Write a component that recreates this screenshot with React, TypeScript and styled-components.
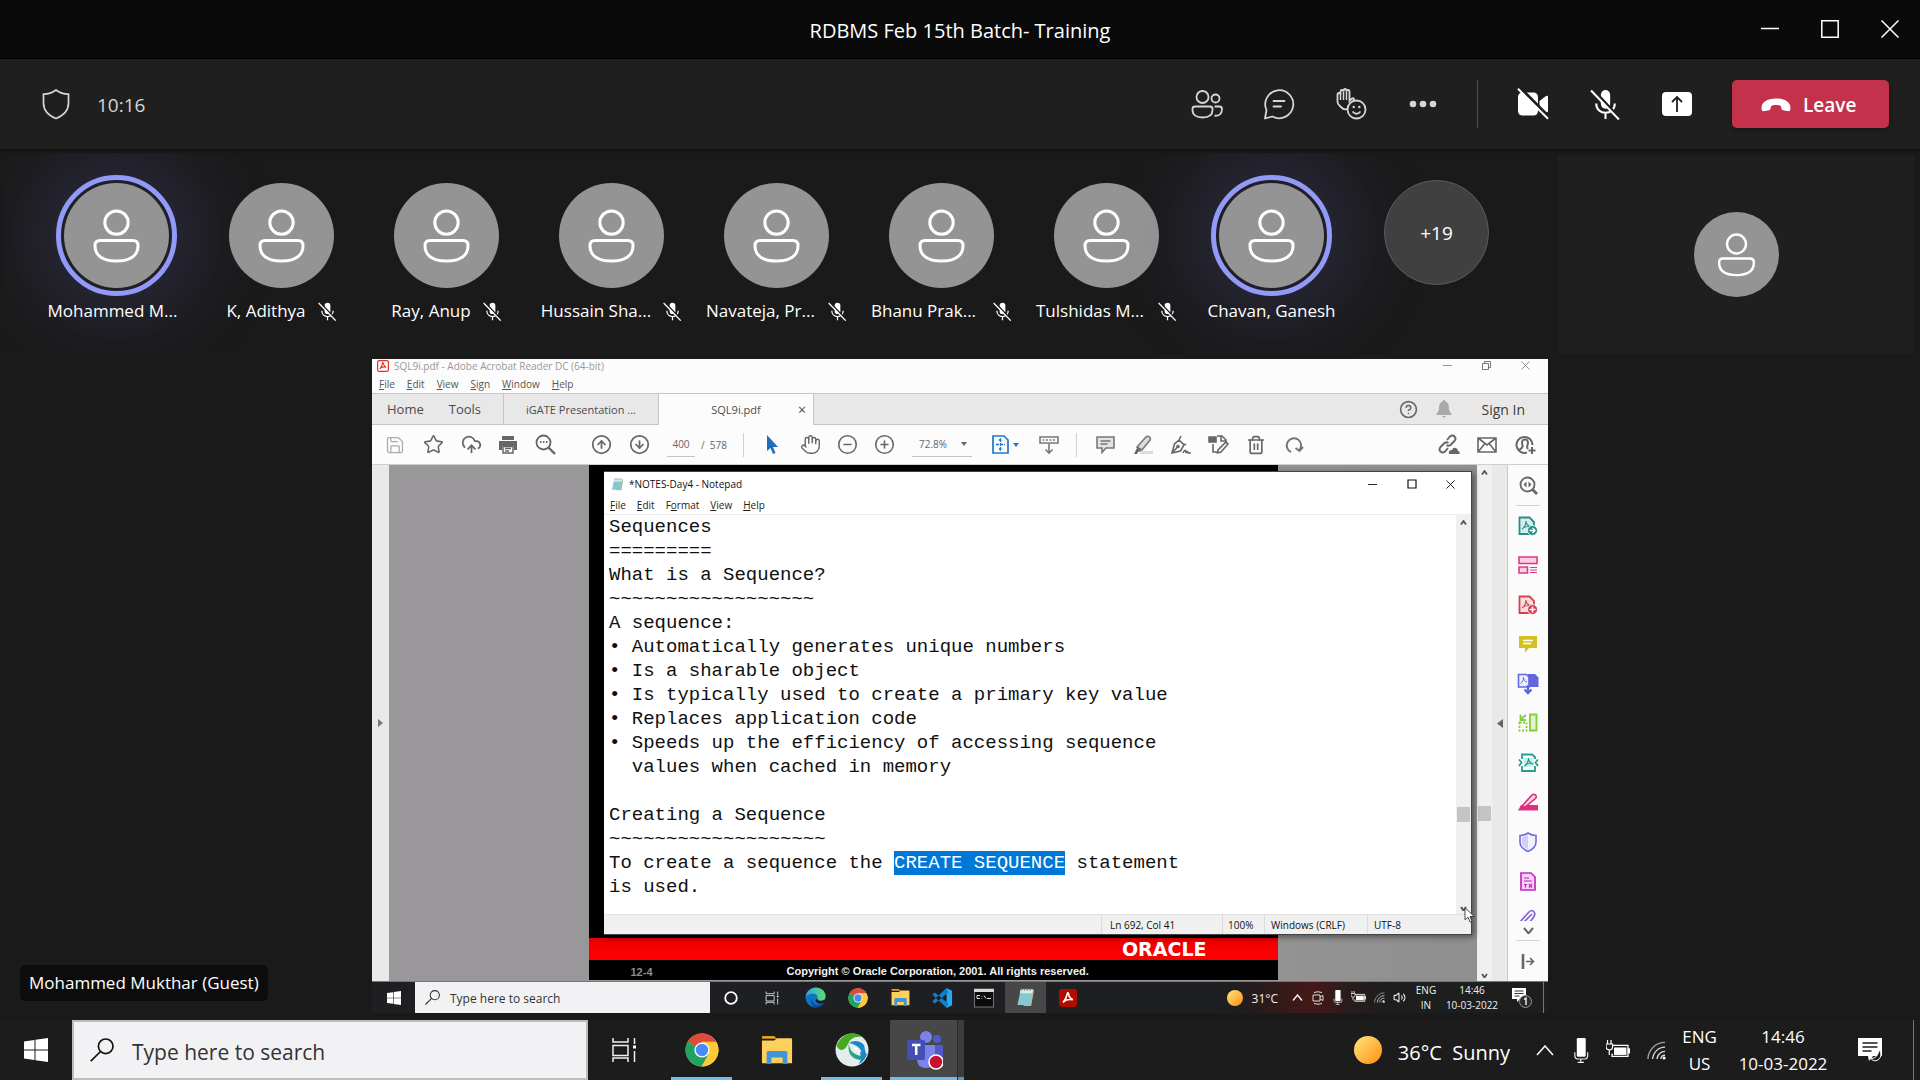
import React from "react";
import styled, { createGlobalStyle, css } from "styled-components";
import {
  Save, Star, CloudUpload, CircleArrowUp, CircleArrowDown, Hand, CircleMinus, CirclePlus,
  Trash2, CircleHelp, Volume2,
} from "lucide-react";

const ui = '"Open Sans", "Noto Sans", sans-serif';

const Global = createGlobalStyle`
  *, *::before, *::after { box-sizing: border-box; }
  body { margin: 0; background: #1a1a1a; font-family: ${ui}; color: #fff; }
  button, input, select { font-family: inherit; color: inherit; border: 0; padding: 0; margin: 0; background: none; border-radius: 0; outline: 0; }
  svg { display: block; flex: none; }
  ul, p, h1, h2 { margin: 0; padding: 0; list-style: none; font-weight: 400; }
`;

/* ---------- Meeting window ---------- */

const Page = styled.div`
  display: flex;
  flex-direction: column;
  min-height: 100vh;
`;

const TitleBar = styled.header`
  display: grid;
  grid-template-columns: 1fr auto 1fr;
  align-items: center;
  height: 59px;
  background: #0a0a0a;
  border-bottom: 1px solid #000;
`;

const MeetingTitle = styled.h1`
  grid-column: 2;
  font-size: 20px;
  line-height: 28px;
  padding-top: 4px;
`;

const WindowControls = styled.div`
  display: flex;
  justify-content: flex-end;
`;

const WindowButton = styled.button`
  display: grid;
  place-items: center;
  width: 60px;
  height: 56px;
`;

const MeetingBar = styled.div`
  display: flex;
  align-items: center;
  height: 90px;
  padding: 0 31px 0 41px;
  background: #1f1f1f;
  color: #d6d6d6;
  box-shadow: 0 1px 4px rgba(0, 0, 0, 0.4);
  z-index: 1;
`;

const Elapsed = styled.span`
  margin-left: 26px;
  padding-top: 2px;
  font-size: 19px;
  line-height: 28px;
`;

const BarActions = styled.div`
  display: flex;
  align-items: center;
  margin-left: auto;
`;

const BarButton = styled.button<{ $bright?: boolean }>`
  display: grid;
  place-items: center;
  width: 72px;
  height: 48px;
  color: ${(p) => (p.$bright ? "#fff" : "#d6d6d6")};
`;

const BarDivider = styled.span`
  width: 1px;
  height: 48px;
  margin: 0 19px 0 18px;
  background: #525252;
`;

const LeaveButton = styled.button`
  display: flex;
  align-items: center;
  gap: 12px;
  width: 157px;
  height: 48px;
  padding: 2px 0 0 29px;
  margin-left: 19px;
  border-radius: 5px;
  background: #c4314b;
  color: #fff;
  font-size: 19px;
  font-weight: 600;
  box-shadow: 0 2px 4px rgba(0, 0, 0, 0.3);
`;

const Roster = styled.section`
  display: flex;
  height: 210px;
  padding: 4px 6px 6px 4px;
`;

const People = styled.ul`
  display: flex;
  flex: 1;
  padding: 30px 0 0 30px;
  overflow: hidden;
`;

const Person = styled.li`
  display: flex;
  flex-direction: column;
  align-items: center;
  width: 165px;
  flex: none;
`;

const Avatar = styled.span<{ $size: number; $speaking?: boolean }>`
  width: ${(p) => p.$size}px;
  height: ${(p) => p.$size}px;
  border-radius: 50%;
  background: #949494;
  ${(p) =>
    p.$speaking &&
    css`
      outline: 5px solid #9299f7;
      outline-offset: 3px;
      box-shadow: 0 0 0 3px #1f1f27, 0 0 90px 20px rgba(104, 100, 190, 0.3);
    `}
`;

const PersonLabel = styled.span`
  display: flex;
  align-items: center;
  gap: 12px;
  margin-top: 10px;
  font-size: 17px;
  line-height: 26px;
  white-space: nowrap;
`;

const PersonName = styled.span<{ $width?: number }>`
  min-width: ${(p) => p.$width ?? 0}px;
`;

const MoreButton = styled.button`
  width: 105px;
  height: 105px;
  margin-top: -3px;
  border-radius: 50%;
  border: 1px solid #5c5c5c;
  background: #404040;
  font-size: 19px;
`;

const SelfTile = styled.div`
  display: grid;
  place-items: center;
  width: 356px;
  margin-top: 3px;
  background: #1f1f1f;
`;

const Stage = styled.main`
  display: grid;
  grid-template-columns: 1fr 61.25% 1fr;
  flex: 1;
  padding-bottom: 7px;
`;

const PresenterColumn = styled.div`
  display: flex;
  align-items: flex-end;
  padding: 0 0 12px 20px;
`;

const PresenterName = styled.span`
  padding: 0 9px;
  border-radius: 5px;
  background: #0c0c0c;
  font-size: 17px;
  line-height: 36px;
  white-space: nowrap;
`;

/* ---------- Shared screen: PDF reader ---------- */

const SharedScreen = styled.section`
  display: flex;
  flex-direction: column;
  min-width: 0;
  overflow: hidden;
  background: #fdfcfd;
  color: #555;
`;

const ReaderTitle = styled.div`
  display: flex;
  align-items: center;
  gap: 5px;
  height: 15px;
  padding: 0 3px 2px 5px;
  color: #999;
  font-size: 10px;
`;

const SmallControls = styled.div`
  display: flex;
  margin-left: auto;
  button {
    display: grid;
    place-items: center;
    width: 39px;
    height: 15px;
  }
`;

const MenuRow = styled.nav<{ $dark?: boolean }>`
  display: flex;
  align-items: center;
  gap: ${(p) => (p.$dark ? 11 : 12)}px;
  height: ${(p) => (p.$dark ? 18 : 19)}px;
  padding-left: ${(p) => (p.$dark ? 6 : 7)}px;
  color: ${(p) => (p.$dark ? "#1c1c1c" : "#555")};
  button {
    font-size: 10px;
    line-height: 16px;
  }
  u {
    text-underline-offset: 1px;
  }
`;

const TabRow = styled.div`
  display: flex;
  height: 32px;
  background: #e9e8e9;
  border-top: 1px solid #c6c6c6;
  border-bottom: 1px solid #c6c6c6;
  color: #4b4b4b;
`;

const HomeTabs = styled.div`
  display: flex;
  align-items: center;
  gap: 25px;
  width: 132px;
  padding-left: 15px;
  border-right: 1px solid #c6c6c6;
  button {
    font-size: 13px;
  }
`;

const FileTab = styled.button<{ $active?: boolean }>`
  position: relative;
  display: grid;
  place-items: center;
  width: 155px;
  height: ${(p) => (p.$active ? 31 : 30)}px;
  border-right: 1px solid #c6c6c6;
  background: ${(p) => (p.$active ? "#fdfcfd" : "transparent")};
  font-size: 11px;
`;

const TabClose = styled.span`
  position: absolute;
  right: 7px;
  font-size: 14px;
  line-height: 14px;
`;

const TabRight = styled.div`
  display: flex;
  align-items: center;
  margin-left: auto;
  padding-right: 23px;
  color: #3c3c3c;
`;

const SignIn = styled.button`
  margin-left: 19px;
  font-size: 14px;
`;

const ToolRow = styled.div`
  display: flex;
  align-items: center;
  height: 40px;
  padding: 0 4px;
  border-bottom: 1px solid #cfcfcf;
  color: #666;
`;

const ToolGroup = styled.div<{ $before?: number; $end?: boolean }>`
  display: flex;
  align-items: center;
  margin-left: ${(p) => (p.$end ? "auto" : `${p.$before ?? 0}px`)};
`;

const ToolButton = styled.button<{ $w?: number }>`
  display: flex;
  align-items: center;
  justify-content: center;
  gap: 4px;
  width: ${(p) => p.$w ?? 38}px;
  height: 30px;
`;

const ToolDivider = styled.span<{ $before: number }>`
  width: 1px;
  height: 24px;
  margin: 0 9px 0 ${(p) => p.$before}px;
  background: #d0d0d0;
`;

const PageInput = styled.input`
  width: 28px;
  height: 24px;
  border-bottom: 1px solid #c4c4c4;
  text-align: center;
  font-size: 10px;
`;

const PageTotal = styled.span`
  margin-left: 6px;
  font-size: 10px;
  white-space: pre;
`;

const ZoomSelect = styled.label`
  display: flex;
  align-items: center;
  width: 60px;
  height: 24px;
  margin-left: 9px;
  padding: 0 5px 0 7px;
  border-bottom: 1px solid #c4c4c4;
  select {
    appearance: none;
    flex: 1;
    min-width: 0;
    font-size: 10px;
  }
`;

const ReaderBody = styled.div`
  display: flex;
  flex: 1;
  min-height: 516px;
`;

const SideHandle = styled.button<{ $right?: boolean }>`
  display: grid;
  place-items: center;
  width: ${(p) => (p.$right ? 16 : 17)}px;
  background: #e9e9e8;
  border-right: ${(p) => (p.$right ? "1px solid #c8c8c8" : "0")};
`;

const DocArea = styled.div`
  position: relative;
  flex: 1;
  min-width: 0;
  background: linear-gradient(90deg, #999799 60%, #8f8f8f);
`;

const Slide = styled.div`
  display: flex;
  flex-direction: column;
  justify-content: flex-end;
  width: 689px;
  height: 100%;
  margin: 0 auto;
  background: #000;
  border-bottom: 1px solid #999;
`;

const SlideBand = styled.div`
  display: flex;
  align-items: center;
  justify-content: flex-end;
  height: 22px;
  padding-right: 71px;
  background: linear-gradient(#e60000, #fb0000 60%);
  color: #fff;
  font: 700 19px/22px "DejaVu Sans", sans-serif;
`;

const SlideFooter = styled.div`
  display: grid;
  grid-template-columns: 156px 1fr;
  align-items: center;
  height: 20px;
  padding-left: 42px;
  color: #f2f2f2;
  font: 700 11px/20px "Liberation Sans", sans-serif;
  white-space: nowrap;
`;

const SlideNumber = styled.span`
  padding-top: 2px;
  color: #8d8d8d;
`;

const ScrollTrack = styled.div`
  display: flex;
  flex-direction: column;
  align-items: center;
  width: 15px;
  padding: 5px 0 3px;
  background: #f0f0f1;
  color: #555;
`;

const ScrollThumb = styled.span<{ $below: number }>`
  width: 13px;
  height: 15px;
  margin: auto 0 ${(p) => p.$below}px;
  background: #c4c4c5;
`;

const ToolPane = styled.aside`
  display: flex;
  flex-direction: column;
  align-items: stretch;
  width: 40px;
  background: #fcfbfc;
  color: #666;
`;

const PaneButton = styled.button<{ $h?: number }>`
  display: grid;
  place-items: center;
  ${(p) => (p.$h ? css`height: ${p.$h}px; flex: none;` : css`flex: 1;`)}
`;

const PaneRule = styled.span`
  height: 1px;
  margin: 0 8px;
  background: #d2d2d2;
`;

const Clipped = styled.span`
  display: flex;
  justify-content: center;
  height: 20px;
  padding-top: 8px;
  overflow: hidden;
`;

/* ---------- Shared screen: Notepad ---------- */

const Notepad = styled.section`
  position: absolute;
  inset: 6px 5px 46px 215px;
  display: flex;
  flex-direction: column;
  background: #fff;
  color: #111;
  border: 1px solid #444;
  border-left: 0;
  box-shadow: 2px 2px 6px rgba(0, 0, 0, 0.45);
`;

const NoteTitle = styled.div`
  display: flex;
  align-items: center;
  gap: 5px;
  height: 24px;
  padding: 0 1px 0 7px;
  font-size: 10px;
`;

const NoteBody = styled.div`
  display: flex;
  flex: 1;
  border-top: 1px solid #ededed;
`;

const NoteText = styled.div`
  flex: 1;
  padding-left: 5px;
  font: 19px/24px "Liberation Mono", monospace;
  color: #101010;
`;

const NoteLine = styled.p`
  display: flex;
  height: 24px;
  white-space: pre;
`;

const Selected = styled.mark`
  background: #0078d7;
  color: #fff;
`;

const NoteStatus = styled.footer`
  display: flex;
  justify-content: flex-end;
  align-items: center;
  height: 20px;
  background: #f0f0f0;
  border-top: 1px solid #e2e2e2;
  font-size: 10px;
  white-space: nowrap;
`;

const StatusCell = styled.span<{ $w: number; $pad: number }>`
  width: ${(p) => p.$w}px;
  padding: 1px 0 0 ${(p) => p.$pad}px;
  line-height: 18px;
  border-left: 1px solid #dadada;
`;

const Pointer = styled.svg`
  position: absolute;
  right: -4px;
  bottom: 11px;
`;

/* ---------- Task bars ---------- */

const SharedTaskbar = styled.footer`
  display: flex;
  align-items: stretch;
  height: 32px;
  color: #f0f0f0;
  border-top: 1px solid #777;
  background: linear-gradient(90deg, #1d1f22 0 72%, #251b1c 75%, #451817 80%, #2a1b1b 83%, #1d1f1e 86%);
`;

const DeskTaskbar = styled.footer`
  display: flex;
  align-items: stretch;
  height: 60px;
  background: #1c1c1c;
`;

const StartButton = styled.button<{ $w: number }>`
  display: grid;
  place-items: center;
  width: ${(p) => p.$w}px;
`;

const SearchBox = styled.label<{ $large?: boolean }>`
  display: flex;
  align-items: center;
  gap: ${(p) => (p.$large ? 18 : 10)}px;
  width: ${(p) => (p.$large ? 516 : 295)}px;
  padding-left: ${(p) => (p.$large ? 16 : 10)}px;
  border: ${(p) => (p.$large ? "2px solid #bdbdbd" : "0")};
  background: #f2f1f3;
  color: #222;
  input {
    flex: 1;
    min-width: 0;
    padding-top: ${(p) => (p.$large ? 4 : 2)}px;
    font-size: ${(p) => (p.$large ? 21 : 12)}px;
  }
  input::placeholder {
    color: #333;
    opacity: 1;
  }
`;

const AppButton = styled.button<{ $w: number; $active?: boolean; $running?: boolean }>`
  display: grid;
  place-items: center;
  width: ${(p) => p.$w}px;
  background: ${(p) => (p.$active ? "#474747" : "transparent")};
  ${(p) => p.$running && css`box-shadow: inset 0 -3px 0 #76b9ed;`}
`;

const Stack = styled.span`
  width: 7px;
  margin-right: 6px;
  border-left: 1px solid #2a2a2a;
  background: #3c3c3c;
  box-shadow: inset 0 -3px 0 #5f94bd;
`;

const Gap = styled.span<{ $w: number }>`
  width: ${(p) => p.$w}px;
`;

const Tray = styled.div`
  display: flex;
  align-items: center;
  margin-left: auto;
`;

const TrayCell = styled.button<{ $w: number }>`
  display: grid;
  place-items: center;
  width: ${(p) => p.$w}px;
  height: 100%;
`;

const Weather = styled.button<{ $large?: boolean }>`
  display: flex;
  align-items: center;
  gap: ${(p) => (p.$large ? 16 : 9)}px;
  font-size: ${(p) => (p.$large ? 20 : 12)}px;
  margin-right: ${(p) => (p.$large ? 17 : 9)}px;
  white-space: pre;
`;

const Degrees = styled.span<{ $large?: boolean }>`
  padding-top: ${(p) => (p.$large ? 4 : 2)}px;
`;

const TwoLine = styled.button<{ $w: number; $large?: boolean }>`
  width: ${(p) => p.$w}px;
  text-align: center;
  white-space: pre-line;
  font-size: ${(p) => (p.$large ? 17 : 10)}px;
  line-height: ${(p) => (p.$large ? 27 : 15)}px;
`;

const DeskEdge = styled.span<{ $after: number }>`
  width: 1px;
  height: 100%;
  margin-right: ${(p) => p.$after}px;
  background: #777;
`;

/* ---------- Drawings ---------- */

const PersonGlyph = ({ size }: { size: number }) => (
  <svg width={size} height={size} viewBox="0 0 105 105" fill="none" stroke="#fff" strokeWidth="3">
    <circle cx="52.500" cy="39.600" r="11.700" />
    <path d="M36 57.500h33q5 0 5 5c0 10-7.500 15.500-21.500 15.500S31 72.500 31 62.500q0-5 5-5z" />
  </svg>
);

const MicOff = ({ size, bright }: { size: number; bright?: boolean }) => (
  <svg width={size} height={size} viewBox="0 0 30 30">
    <rect x="10.500" y="1" width="9" height="18" rx="4.500" fill="#fff" />
    <path d="M6 14c0 12 18 12 18 0M15 23.500v5.500" fill="none" stroke="#fff" strokeWidth="2" />
    <path d="M3 .5l26 28" stroke={bright ? "#1f1f1f" : "#1a1a1a"} strokeWidth="2.500" />
    <path d="M1 1.500l27 28" stroke="#fff" strokeWidth="2" />
  </svg>
);

const WindowsLogo = ({ size }: { size: number }) => (
  <svg width={size} height={size} viewBox="0 0 24 24" fill="#fff">
    <path d="M0 3.400 10.500 2v9.500H0zM11.500 1.800 24 0v11.500H11.500zM0 12.500h10.500V22L0 20.600zM11.500 12.500H24V24l-12.500-1.800z" />
  </svg>
);

const Magnifier = ({ size, color }: { size: number; color: string }) => (
  <svg width={size} height={size} viewBox="0 0 24 24" fill="none" stroke={color} strokeWidth="1.700">
    <circle cx="15.700" cy="8.300" r="7.300" />
    <path d="M10.500 13.500.8 23.200" />
  </svg>
);

const TaskView = ({ size }: { size: number }) => (
  <svg width={size} height={size} viewBox="0 0 26 26" fill="none" stroke="#f0f0f0" strokeWidth="1.500">
    <path d="M2 1v4h15V1M2 25v-4h15v4M2 8.500h15v10H2zM23.500 1v6M23.500 14v11" />
    <path d="M22 8.500h3v3h-3z" fill="#fff" stroke="none" />
  </svg>
);

const Chrome = ({ size }: { size: number }) => (
  <svg width={size} height={size} viewBox="0 0 34 34">
    <circle cx="17" cy="17" r="16.500" fill="#fdc93a" />
    <path d="M17 17 2.700 8.800A16.500 16.500 0 0 1 31.300 8.800H17z" fill="#dd4b3e" />
    <path d="M2.700 8.800A16.500 16.500 0 0 0 16.500 33.500L24 21z" fill="#1ea362" />
    <path d="M17 9.500h14.700a16.500 16.500 0 0 1-15 24L23.500 21z" fill="#fdc93a" />
    <circle cx="17" cy="17" r="7.600" fill="#fff" />
    <circle cx="17" cy="17" r="6.200" fill="#4a8af4" />
  </svg>
);

const Folder = ({ size }: { size: number }) => (
  <svg width={size} height={size} viewBox="0 0 34 34">
    <path d="M1 3q0-1 1-1h12l3 3H1z" fill="#e0a11b" />
    <path d="M1 7h13l3-2.500h15q1 0 1 1V31H1z" fill="#fdd05a" />
    <path d="M6 32V20q0-2 2-2h18q2 0 2 2v12h-5v-7H11v7z" fill="#3f94dc" />
  </svg>
);

const Webex = () => (
  <svg width="34" height="38" viewBox="0 0 34 38">
    <circle cx="17" cy="19" r="16.500" fill="#e4eced" />
    <path d="M1.500 15C6 3 18-1 27 6c-8-1-12 2-14 7-3 7-8 8-11.500 2z" fill="#49a821" />
    <path d="M14 12c4-3 11-3 15 2l2 9-4 2c0-7-4-11-13-13z" fill="#1d87c9" />
    <path d="M14 12c0 7 4 12 13 13l-2 4c-9-1-13-8-11-17z" fill="#2f9f82" />
    <path d="M25 21c3 0 5 1 7 2-1 4-4 8-8 10 2-4 2-8 1-12z" fill="#1d87c9" />
    <path d="M18 15c3 1 6 3 7 7-4-1-6-4-7-7z" fill="#fff" />
  </svg>
);

const Teams = () => (
  <svg width="38" height="40" viewBox="0 0 38 40">
    <circle cx="21" cy="7" r="6" fill="#7b83eb" />
    <circle cx="32" cy="9" r="4" fill="#5059c9" />
    <path d="M26 15h12v14q0 7-7 7-5 0-5-5z" fill="#5059c9" />
    <path d="M12 15h18v14q0 9-9 9t-9-9z" fill="#7b83eb" />
    <rect x="2" y="10" width="18" height="20" rx="1.500" fill="#464eb8" />
    <path d="M7 15h8.500M11.200 15v10" stroke="#fff" strokeWidth="2.500" />
    <circle cx="31" cy="32" r="7" fill="#c8102e" stroke="#fff" strokeWidth="1.500" />
  </svg>
);

const Edge = () => (
  <svg width="21" height="21" viewBox="0 0 24 24">
    <defs>
      <linearGradient id="edgeTop" x1="0" x2="1">
        <stop offset="0" stopColor="#2fa8e8" />
        <stop offset="1" stopColor="#5fdc6c" />
      </linearGradient>
    </defs>
    <circle cx="12" cy="12" r="11.500" fill="#1273c4" />
    <path d="M.7 11C2 3.500 8 .5 12.500.5 19 .5 23.500 5 23.500 10c0 4-3 6-6.500 6-3 0-3.500-1.500-3-3 1.500-4-3-6-6-5.500S2 9 .7 11z" fill="url(#edgeTop)" />
    <path d="M8 13c-1 5 4 9 10 7 2-.6 3.500-1.500 4-2.300-2 4-6 5.800-10 5.800C8 23 5 16 8 13z" fill="#0c4a9b" />
    <path d="M14 13c1 3 5 3.500 9 1.500-.3 2-1 3-1.500 3.500-4 2-9 1-9.500-2.500z" fill="#1d1f22" />
  </svg>
);

const VsCode = () => (
  <svg width="22" height="22" viewBox="0 0 24 24">
    <path d="M17 1v22l6-3V4z" fill="#2aa9f0" />
    <path d="M17 1 1.500 15.500 4 18 19 6zM17 23 1.500 8.500 4 6l15 12z" fill="#0f80cc" />
  </svg>
);

const Terminal = () => (
  <svg width="20" height="20" viewBox="0 0 20 20">
    <rect x=".5" y="1" width="19" height="18" fill="#0b0b0b" stroke="#777" />
    <path d="M0 1h20v3H0z" fill="#d6d6d6" />
    <path d="M3 7.500h3M3 7.500v3h3M8 8v.5M8 10v.5M10 7.500l2 3M13 10.500h4" stroke="#ddd" fill="none" />
  </svg>
);

const NotepadIcon = ({ size }: { size: number }) => (
  <svg width={size} height={size} viewBox="0 0 20 20">
    <path d="M5 2h14l-3 17H8z" fill="#c9b37c" />
    <path d="M5 1.500h13L15 18H1.500z" fill="#86c8cf" />
    <path d="M5 1.500h13l-1 4H4z" fill="#d4eef0" />
    <path d="M6 0v3M9 0v3M12 0v3M15 0v3" stroke="#777" strokeWidth=".8" />
  </svg>
);

const AcrobatIcon = ({ size, filled }: { size: number; filled?: boolean }) => (
  <svg width={size} height={size} viewBox="0 0 20 20">
    <rect x="1" y="1" width="18" height="18" rx="2.500" fill={filled ? "#b30b00" : "#fff"} stroke={filled ? "#b30b00" : "#e0322b"} strokeWidth="2" />
    <path d="M10 4c-1.500 0 0 5-5.500 11M10 4c1.500 1-1 5 5.500 8M4.500 15c2-3 7-4 11-3" fill="none" stroke={filled ? "#fff" : "#e0322b"} strokeWidth="1.800" />
  </svg>
);

const Sun = ({ size, id }: { size: number; id: string }) => (
  <svg width={size} height={size} viewBox="0 0 28 28">
    <defs>
      <linearGradient id={id} x1="0" y1="0" x2="1" y2="1">
        <stop offset="0" stopColor="#ffe680" />
        <stop offset="1" stopColor="#ff8f0f" />
      </linearGradient>
    </defs>
    <circle cx="14" cy="14" r="14" fill={`url(#${id})`} />
  </svg>
);

const Chevron = ({ w, dir = "up", stroke = 1.5 }: { w: number; dir?: "up" | "down"; stroke?: number }) => (
  <svg width={w} height={w / 2 + 2} viewBox={`0 0 ${w} ${w / 2 + 2}`} fill="none" stroke="currentColor" strokeWidth={stroke}>
    <path d={dir === "up" ? `M1 ${w / 2 + 1}L${w / 2} 1L${w - 1} ${w / 2 + 1}` : `M1 1L${w / 2} ${w / 2 + 1}L${w - 1} 1`} />
  </svg>
);

const TrayMic = ({ h }: { h: number }) => (
  <svg width={h / 1.6} height={h} viewBox="0 0 15 28">
    <rect x="3" y="0" width="10" height="21" rx="1.500" fill="#fff" />
    <path d="M.8 16v4q0 3.500 3 3.500h8.400q3 0 3-3.500v-4M7.500 23v4M4 27.300h7" fill="none" stroke="#eee" strokeWidth="1.300" />
  </svg>
);

const Battery = ({ w }: { w: number }) => (
  <svg width={w} height={w * 0.83} viewBox="0 0 24 20">
    <path d="M5 5.500h17v11H6v-3M22.500 9h1v4h-1z" fill="none" stroke="#fff" strokeWidth="1.300" />
    <path d="M8 7.500h12.500v7.500H8z" fill="#fff" />
    <path d="M1.500 0v4M5 0v4M0 4h6.500v3q0 3-3.200 3T0 7zM3.200 10v5" fill="#1c1c1c" stroke="#fff" strokeWidth="1.200" />
  </svg>
);

const Wifi = ({ s }: { s: number }) => (
  <svg width={s} height={s} viewBox="0 0 20 20" fill="none" stroke="#ddd" strokeWidth="1.400">
    <path d="M1 19A18 18 0 0 1 19 1.500" opacity=".7" />
    <path d="M6 19A13 13 0 0 1 19 6.500M10.500 19a8.500 8.500 0 0 1 8.500-8" />
    <path d="M14.500 19A4.500 4.500 0 0 1 19 15" />
    <circle cx="18" cy="18" r="1.600" fill="#fff" stroke="none" />
  </svg>
);

const PdfPage = ({ color, badge }: { color: string; badge?: "arrow" | "plus" }) => (
  <svg width="20" height="20" viewBox="0 0 20 20" fill="none" stroke={color}>
    <path d="M1.500 1.500h10L16 6v12H1.500z" fill={color} fillOpacity=".15" strokeWidth="1.800" />
    <path d="M8 5c0 4-1 6-4 8M8 5c0 3 2 5 5 6M4 13c2-2 6-3 9-2" strokeWidth="1.100" />
    {badge && <circle cx="14.500" cy="14.500" r="5" fill={color} stroke="#fff" strokeWidth=".8" />}
    {badge === "arrow" && <path d="M11.500 14.500h5M14.500 12l2.500 2.500-2.500 2.500" stroke="#fff" strokeWidth="1.300" />}
    {badge === "plus" && <path d="M11.500 14.500h6M14.500 11.500v6" stroke="#fff" strokeWidth="1.500" />}
  </svg>
);

const paneIcons: [string, React.ReactNode][] = [
  ["Export PDF", <PdfPage color="#23918a" badge="arrow" />],
  ["Edit PDF", (
    <svg width="20" height="18" viewBox="0 0 20 18" fill="#fbd0e3" stroke="#d93a88" strokeWidth="1.600">
      <path d="M1 1h18v6.500H1zM1 11h8.500v6H1z" /><path d="M12 11.500h7M12 14h7M12 16.500h7" strokeWidth="1" />
    </svg>
  )],
  ["Create PDF", <PdfPage color="#d9404d" badge="plus" />],
  ["Comment", (
    <svg width="18" height="18" viewBox="0 0 18 18"><path d="M0 1h18v12h-8l-4 4.500V13H0z" fill="#d3c122" /><path d="M4 5.500h10M4 8.500h8" stroke="#fff" strokeWidth="1.300" /></svg>
  )],
  ["Combine Files", (
    <svg width="22" height="22" viewBox="0 0 22 22"><path d="M11 1h7l3.500 3.500V14H11z" fill="#6266e0" /><path d="M1.500 1.500h8L12 4v10H1.500z" fill="#eeeefd" stroke="#6266e0" strokeWidth="1.600" /><path d="M6.500 4.500c0 3-1 4-3 6M6.500 4.500c0 2 1 4 3.500 4.500" stroke="#6266e0" fill="none" /><path d="M11 12v7M7.500 16.500 11 20l3.500-3.500" stroke="#6266e0" strokeWidth="2.400" fill="none" /></svg>
  )],
  ["Organize Pages", (
    <svg width="20" height="20" viewBox="0 0 20 20" fill="none" stroke="#86cc3c" strokeWidth="1.800"><path d="M12 1.500h6.500v16H12z" fill="#e1f4cd" /><path d="M1.500 9.500h7v8h-7z" strokeDasharray="2 1.500" /><path d="M8 2 3 6M2.500 1.500v5.500h5.500" /></svg>
  )],
  ["Compress PDF", (
    <svg width="21" height="20" viewBox="0 0 21 20" fill="none" stroke="#23a08f" strokeWidth="1.800"><path d="M5.500 5h10v9h-10z" fill="#cdeeea" stroke="none" /><path d="M4 6V1.500h10L17 4v2M4 13v5h13v-5" /><path d="M1 6.500 3.500 9.500 1 13M20 6.500l-2.500 3L20 13" /><path d="M10.500 5c0 4-1 5-4 8M10.500 5c0 3 1 5 5 6M6.500 13c2-2 6-3 9-2" strokeWidth="1.200" /></svg>
  )],
  ["Redact", (
    <svg width="20" height="18" viewBox="0 0 20 18"><path d="M0 17.500 3 12h17v5.500z" fill="#df2e80" /><path d="M4 13 14 2q2-1.500 3.500 0t0 3.500L7 14z" fill="#fbd0e3" stroke="#df2e80" strokeWidth="1.600" /></svg>
  )],
  ["Protect", (
    <svg width="18" height="20" viewBox="0 0 18 20"><path d="M9 1c2.500 1.800 5 2.500 8 2.500V10c0 4.500-3.500 7.500-8 9.500C4.500 17.500 1 14.500 1 10V3.500C4 3.500 6.500 2.800 9 1z" fill="#f2f2ff" stroke="#6e6ce0" strokeWidth="1.600" /><path d="M9 3v14.500C5 15.500 3 13 3 10V5c2 0 4-.8 6-2z" fill="#cfcffa" /></svg>
  )],
  ["Prepare Form", (
    <svg width="16" height="19" viewBox="0 0 16 19"><path d="M1 1h10l4 4v13H1z" fill="#f7d3f6" stroke="#c02bbd" strokeWidth="1.700" /><path d="M4 6h5M4 9h8M4 12.500h3M5.500 12.500v3M9 12l3 3.500M12 12l-3 3.500" stroke="#c02bbd" strokeWidth="1.200" /></svg>
  )],
];

const people: { name: string; muted?: boolean; speaking?: boolean; width?: number }[] = [
  { name: "Mohammed M...", speaking: true, width: 138 },
  { name: "K, Adithya", muted: true },
  { name: "Ray, Anup", muted: true },
  { name: "Hussain Sha...", muted: true, width: 110 },
  { name: "Navateja, Pr...", muted: true, width: 110 },
  { name: "Bhanu Prak...", muted: true, width: 110 },
  { name: "Tulshidas M...", muted: true, width: 110 },
  { name: "Chavan, Ganesh", speaking: true },
];

const noteLines = [
  "Sequences",
  "=========",
  "What is a Sequence?",
  "~~~~~~~~~~~~~~~~~~",
  "A sequence:",
  "• Automatically generates unique numbers",
  "• Is a sharable object",
  "• Is typically used to create a primary key value",
  "• Replaces application code",
  "• Speeds up the efficiency of accessing sequence",
  "  values when cached in memory",
  "",
  "Creating a Sequence",
  "~~~~~~~~~~~~~~~~~~~",
];

const Menu = ({ items, dark }: { items: [string, string, string][]; dark?: boolean }) => (
  <MenuRow $dark={dark}>
    {items.map(([a, b, c]) => (
      <button key={a + b + c}>{a}<u>{b}</u>{c}</button>
    ))}
  </MenuRow>
);

const Caret = ({ color = "#666" }: { color?: string }) => (
  <svg width="6" height="4" viewBox="0 0 6 4"><path d="M0 0h6L3 4z" fill={color} /></svg>
);

const Minimize = ({ s, c }: { s: number; c: string }) => (
  <svg width={s} height={s} viewBox="0 0 10 10" stroke={c} fill="none" strokeWidth="1"><path d="M0 5h10" /></svg>
);
const Cross = ({ s, c }: { s: number; c: string }) => (
  <svg width={s} height={s} viewBox="0 0 10 10" stroke={c} fill="none" strokeWidth="1"><path d="M.5.5l9 9M9.500.5l-9 9" /></svg>
);

function ReaderToolbar() {
  return (
    <ToolRow>
      <ToolGroup>
        <ToolButton aria-label="Save"><Save size={20} strokeWidth={1.5} color="#aaa" /></ToolButton>
        <ToolButton aria-label="Star"><Star size={21} strokeWidth={1.8} /></ToolButton>
        <ToolButton aria-label="Upload"><CloudUpload size={21} strokeWidth={2} /></ToolButton>
        <ToolButton $w={36} aria-label="Print">
          <svg width="20" height="20" viewBox="0 0 20 20"><path d="M4 1h12v4H4zM1 6h18v9h-3v-4H4v4H1z" fill="#666" /><path d="M5 11.500h10V18H5zM7 13.500h6M7 16h4" fill="none" stroke="#666" strokeWidth="1.500" /></svg>
        </ToolButton>
        <ToolButton aria-label="Find">
          <svg width="21" height="21" viewBox="0 0 21 21" fill="none" stroke="#666" strokeWidth="1.800"><circle cx="8.500" cy="8.500" r="7" /><path d="M13.500 13.500 20 20" strokeWidth="2.400" /><path d="M5 8h1.500M8 8h1.500M11 8h1.500" /></svg>
        </ToolButton>
      </ToolGroup>
      <ToolGroup $before={18}>
        <ToolButton aria-label="Previous page"><CircleArrowUp size={21} /></ToolButton>
        <ToolButton aria-label="Next page"><CircleArrowDown size={21} /></ToolButton>
      </ToolGroup>
      <ToolGroup $before={9}>
        <PageInput aria-label="Page number" defaultValue="400" />
        <PageTotal>{"/  578"}</PageTotal>
      </ToolGroup>
      <ToolDivider $before={16} />
      <ToolGroup>
        <ToolButton aria-label="Select">
          <svg width="12" height="19" viewBox="0 0 12 19"><path d="M1 0v16l3.500-3L7 19l2.500-1L7 12h5z" fill="#1f6fbe" /></svg>
        </ToolButton>
        <ToolButton aria-label="Pan"><Hand size={21} strokeWidth={1.6} /></ToolButton>
        <ToolButton $w={36} aria-label="Zoom out"><CircleMinus size={21} strokeWidth={1.8} /></ToolButton>
        <ToolButton aria-label="Zoom in"><CirclePlus size={21} strokeWidth={1.8} /></ToolButton>
      </ToolGroup>
      <ZoomSelect>
        <select aria-label="Zoom level" defaultValue="72.8%"><option>72.8%</option></select>
        <Caret />
      </ZoomSelect>
      <ToolGroup $before={8}>
        <ToolButton $w={50} aria-label="Fit page">
          <svg width="17" height="19" viewBox="0 0 17 19" fill="none" stroke="#1f78c8" strokeWidth="1.700"><path d="M1 1h11l4 4v13H1z" /><path d="M8.500 4v11M4 9.500h9M7 5.500 8.500 4 10 5.500M7 13.500 8.500 15l1.500-1.500" strokeWidth="1.300" strokeDasharray="3 1" /></svg>
          <Caret color="#1f78c8" />
        </ToolButton>
        <ToolButton aria-label="Read mode">
          <svg width="20" height="20" viewBox="0 0 20 20" fill="none" stroke="#777" strokeWidth="1.600"><path d="M1 2h18v6H1z" /><path d="M3.500 5h13" strokeDasharray="2 1.500" /><path d="M10 9v9M6.500 14.500 10 18l3.500-3.500" /></svg>
        </ToolButton>
      </ToolGroup>
      <ToolDivider $before={8} />
      <ToolGroup>
        <ToolButton aria-label="Comment">
          <svg width="19" height="18" viewBox="0 0 19 18" fill="#e3e3e3" stroke="#777" strokeWidth="1.600"><path d="M1 1h17v11h-8l-4 4.500V12H1z" /><path d="M4.500 5h10M4.500 8h7" /></svg>
        </ToolButton>
        <ToolButton aria-label="Highlight">
          <svg width="20" height="20" viewBox="0 0 20 20"><path d="M8 16h12v3H6z" fill="#ddd" /><path d="M4 12 13 2q2-1.500 3.500 0T17 5L9 15z" fill="#ddd" stroke="#777" strokeWidth="1.600" /><path d="M4.500 12 8.500 16 5 17l-1 2H1z" fill="#666" /></svg>
        </ToolButton>
        <ToolButton $w={37} aria-label="Sign">
          <svg width="20" height="20" viewBox="0 0 20 20" fill="none" stroke="#666" strokeWidth="1.600"><path d="M1 18 3.500 9 8 5l5 5-3.500 6zM1 18l5.500-6M8 5l2-4M13 10l2-1M12 18c2-4 3-3 3 0 1-2 2-2 2 0h3" /><circle cx="7" cy="11.500" r="1" /></svg>
        </ToolButton>
        <ToolButton aria-label="Edit page">
          <svg width="21" height="21" viewBox="0 0 21 21" fill="none" stroke="#666" strokeWidth="1.600"><path d="M9 2h5l4 4v3M5 10v8h4M13 2v5h5M10 16l8-8 2 2-7 8-3.500 1z" /><path d="M1 3h7v5H1z" fill="#666" /></svg>
        </ToolButton>
        <ToolButton aria-label="Delete"><Trash2 size={20} /></ToolButton>
        <ToolButton aria-label="Rotate">
          <svg width="19" height="19" viewBox="0 0 19 19" fill="none" stroke="#777" strokeWidth="2"><path d="M6 17A7.200 7.200 0 1 1 14.500 15M18 12l-3.500 4-4-3" /></svg>
        </ToolButton>
      </ToolGroup>
      <ToolGroup $end>
        <ToolButton aria-label="Share link">
          <svg width="22" height="21" viewBox="0 0 22 21" fill="none" stroke="#666" strokeWidth="1.900"><path d="m9 6 3-3.500q2.500-2 4.500 0t0 4.500l-4 4q-2 1.500-4 0M10 14l-3 3.500q-2.500 2-4.500 0t0-4.500l4-4q2-1.500 4 0" /><path d="M11 20q-1-4 3-4 1-3 4-2 2 1 2 3 2 0 1.500 3z" fill="#666" stroke="none" /></svg>
        </ToolButton>
        <ToolButton aria-label="Mail">
          <svg width="20" height="16" viewBox="0 0 20 16" fill="none" stroke="#666" strokeWidth="1.600"><path d="M1 1h18v14H1zM1 1l9 7 9-7M1 15l6.500-8M19 15l-6.500-8" /></svg>
        </ToolButton>
        <ToolButton aria-label="Add people">
          <svg width="21" height="20" viewBox="0 0 21 20" fill="none" stroke="#666" strokeWidth="2"><path d="M12 17.500A8 8 0 1 1 17.500 10" /><path d="M10 4.500c3 0 3.500 3 2.500 5.500-.5 1.500-.5 3 .5 4M10 4.500C7 4.500 6.500 7.500 7.500 10c.5 1.500.5 3-3.500 5" /><path d="M17 12v7M13.500 15.500h7" /></svg>
        </ToolButton>
      </ToolGroup>
    </ToolRow>
  );
}

function NotepadWindow() {
  return (
    <Notepad>
      <NoteTitle>
        <NotepadIcon size={13} />
        <span>*NOTES-Day4 - Notepad</span>
        <SmallControls>
          <button aria-label="Minimize"><Minimize s={9} c="#111" /></button>
          <button aria-label="Maximize"><svg width="10" height="10"><path d="M1 1h8v8H1z" fill="none" stroke="#111" strokeWidth="1.200" /></svg></button>
          <button aria-label="Close"><Cross s={9} c="#111" /></button>
        </SmallControls>
      </NoteTitle>
      <Menu dark items={[["", "F", "ile"], ["", "E", "dit"], ["F", "o", "rmat"], ["", "V", "iew"], ["", "H", "elp"]]} />
      <NoteBody>
        <NoteText>
          {noteLines.map((line, i) => <NoteLine key={i}>{line}</NoteLine>)}
          <NoteLine><span>{"To create a sequence the "}</span><Selected>CREATE SEQUENCE</Selected><span>{" statement"}</span></NoteLine>
          <NoteLine>is used.</NoteLine>
        </NoteText>
        <ScrollTrack>
          <Chevron w={7} stroke={1.8} />
          <ScrollThumb $below={84} />
          <Chevron w={7} dir="down" stroke={2} />
        </ScrollTrack>
      </NoteBody>
      <NoteStatus>
        <StatusCell $w={121} $pad={8}>Ln 692, Col 41</StatusCell>
        <StatusCell $w={42} $pad={5}>100%</StatusCell>
        <StatusCell $w={103} $pad={6}>Windows (CRLF)</StatusCell>
        <StatusCell $w={104} $pad={6}>UTF-8</StatusCell>
      </NoteStatus>
      <Pointer width="11" height="16" viewBox="0 0 11 16"><path d="M1 .8v12l3-2.600L6 15l2-.8-2-4.700h4.300z" fill="#fff" stroke="#333" strokeWidth=".9" /></Pointer>
    </Notepad>
  );
}

function SharedDesktop() {
  return (
    <SharedScreen>
      <ReaderTitle>
        <AcrobatIcon size={12} />
        <span>SQL9i.pdf - Adobe Acrobat Reader DC (64-bit)</span>
        <SmallControls>
          <button aria-label="Minimize"><Minimize s={9} c="#888" /></button>
          <button aria-label="Restore"><svg width="10" height="10" fill="none" stroke="#777"><path d="M.5 2.500h6v6h-6zM2.500 2.500v-2h6v6h-2" /></svg></button>
          <button aria-label="Close"><Cross s={9} c="#888" /></button>
        </SmallControls>
      </ReaderTitle>
      <Menu items={[["", "F", "ile"], ["", "E", "dit"], ["", "V", "iew"], ["", "S", "ign"], ["", "W", "indow"], ["", "H", "elp"]]} />
      <TabRow>
        <HomeTabs><button>Home</button><button>Tools</button></HomeTabs>
        <FileTab>iGATE Presentation ...</FileTab>
        <FileTab $active>SQL9i.pdf<TabClose>×</TabClose></FileTab>
        <TabRight>
          <ToolButton $w={36} aria-label="Help"><CircleHelp size={19} color="#666" /></ToolButton>
          <ToolButton $w={36} aria-label="Notifications">
            <svg width="16" height="18" viewBox="0 0 16 18" fill="#aaa"><path d="M8 0q1.500 0 1.500 1.500C13 3 13 6 13 10l2.500 4v1H.5v-1L3 10c0-4 0-7 3.500-8.500Q6.500 0 8 0zM6 16h4q-2 3-4 0z" /></svg>
          </ToolButton>
          <SignIn>Sign In</SignIn>
        </TabRight>
      </TabRow>
      <ReaderToolbar />
      <ReaderBody>
        <SideHandle aria-label="Open navigation"><svg width="5" height="8"><path d="M0 0v8l5-4z" fill="#777" /></svg></SideHandle>
        <DocArea>
          <Slide>
            <SlideBand>ORACLE</SlideBand>
            <SlideFooter><SlideNumber>12-4</SlideNumber><span>Copyright © Oracle Corporation, 2001. All rights reserved.</span></SlideFooter>
          </Slide>
          <NotepadWindow />
        </DocArea>
        <ScrollTrack>
          <Chevron w={7} stroke={1.8} />
          <ScrollThumb $below={152} />
          <Chevron w={7} dir="down" stroke={1.8} />
        </ScrollTrack>
        <SideHandle $right aria-label="Collapse tools"><svg width="6" height="9"><path d="M6 0v9L0 4.500z" fill="#666" /></svg></SideHandle>
        <ToolPane>
          <PaneButton $h={40} aria-label="Search tools">
            <svg width="19" height="19" viewBox="0 0 19 19" fill="none" stroke="#666" strokeWidth="1.800"><circle cx="8.500" cy="8.500" r="7" /><path d="m13.500 13.500 4.500 4.500" strokeWidth="2.600" /><path d="M7.500 5.500v6L4.500 8.500zM9.500 5.500v6l3-3z" fill="#666" stroke="none" /></svg>
          </PaneButton>
          <PaneRule />
          {paneIcons.map(([label, icon]) => (
            <PaneButton key={label} aria-label={label}>{icon}</PaneButton>
          ))}
          <Clipped>
            <svg width="18" height="18" viewBox="0 0 18 18" fill="none" stroke="#8361d6" strokeWidth="1.700"><path d="M1 13 10 3q3-3 5 0 2 2-1 6l-3 4" /><path d="m5 13 8-8" /></svg>
          </Clipped>
          <PaneButton $h={19} aria-label="More tools"><Chevron w={11} dir="down" stroke={2} /></PaneButton>
          <PaneRule />
          <PaneButton $h={40} aria-label="Expand pane">
            <svg width="14" height="15" viewBox="0 0 14 15" fill="none" stroke="#666" strokeWidth="2"><path d="M2 0v15" strokeWidth="2.600" /><path d="M5 7.500h7M9 4l3.500 3.500L9 11" strokeWidth="1.600" /></svg>
          </PaneButton>
        </ToolPane>
      </ReaderBody>
      <SharedTaskbar>
        <StartButton $w={43} aria-label="Start"><WindowsLogo size={14} /></StartButton>
        <SearchBox><Magnifier size={15} color="#333" /><input aria-label="Search the shared desktop" placeholder="Type here to search" /></SearchBox>
        <AppButton $w={41} aria-label="Cortana"><svg width="14" height="14"><circle cx="7" cy="7" r="5.800" fill="none" stroke="#fff" strokeWidth="1.800" /></svg></AppButton>
        <AppButton $w={42} aria-label="Task view"><TaskView size={14} /></AppButton>
        <AppButton $w={44} aria-label="Edge"><Edge /></AppButton>
        <AppButton $w={42} aria-label="Chrome"><Chrome size={20} /></AppButton>
        <AppButton $w={42} aria-label="Files"><Folder size={19} /></AppButton>
        <AppButton $w={42} aria-label="Code"><VsCode /></AppButton>
        <AppButton $w={42} aria-label="Terminal"><Terminal /></AppButton>
        <AppButton $w={41} $active aria-label="Notepad"><NotepadIcon size={19} /></AppButton>
        <AppButton $w={43} aria-label="Acrobat"><AcrobatIcon size={18} filled /></AppButton>
        <Tray>
          <Weather><Sun size={16} id="sunSmall" /><Degrees>31°C</Degrees></Weather>
          <TrayCell $w={20} aria-label="Hidden icons"><Chevron w={11} /></TrayCell>
          <TrayCell $w={21} aria-label="Meet now">
            <svg width="12" height="14" viewBox="0 0 12 14" fill="none" stroke="#ddd"><path d="M1 4h7v6H1zM8 6l3-1.500v5L8 8M2 1.500q4-1.500 8 0M2 12.500q4 1.500 8 0" /></svg>
          </TrayCell>
          <TrayCell $w={20} aria-label="Microphone"><TrayMic h={15} /></TrayCell>
          <TrayCell $w={21} aria-label="Battery"><Battery w={15} /></TrayCell>
          <TrayCell $w={20} aria-label="Network"><Wifi s={11} /></TrayCell>
          <TrayCell $w={20} aria-label="Volume"><Volume2 size={13} /></TrayCell>
          <TwoLine $w={34}>{"ENG\nIN"}</TwoLine>
          <TwoLine $w={58}>{"14:46\n10-03-2022"}</TwoLine>
          <TrayCell $w={42} aria-label="Notifications">
            <svg width="22" height="22" viewBox="0 0 22 22"><path d="M1 1h14v11H9l-3 3v-3H1z" fill="#fff" /><path d="M3.500 4h9M3.500 6.500h9M3.500 9h5" stroke="#333" /><circle cx="14.500" cy="14.500" r="6" fill="#2b2b2b" stroke="#999" /><path d="m13 12.500 2-1.500v7" fill="none" stroke="#fff" strokeWidth="1.300" /></svg>
          </TrayCell>
          <DeskEdge $after={4} />
        </Tray>
      </SharedTaskbar>
    </SharedScreen>
  );
}

export default function App() {
  return (
    <Page>
      <Global />
      <TitleBar>
        <MeetingTitle>RDBMS Feb 15th Batch- Training</MeetingTitle>
        <WindowControls>
          <WindowButton aria-label="Minimize"><svg width="18" height="18"><path d="M0 8.500h18" stroke="#fff" strokeWidth="1.500" /></svg></WindowButton>
          <WindowButton aria-label="Maximize"><svg width="18" height="18"><path d="M.8.8h16.400v16.400H.8z" fill="none" stroke="#fff" strokeWidth="1.500" /></svg></WindowButton>
          <WindowButton aria-label="Close"><svg width="18" height="18"><path d="M.5.5l17 17M17.500.5l-17 17" stroke="#fff" strokeWidth="1.500" /></svg></WindowButton>
        </WindowControls>
      </TitleBar>
      <MeetingBar>
        <svg width="30" height="32" viewBox="0 0 30 32" fill="none" stroke="#d6d6d6" strokeWidth="1.700">
          <path d="M15 2c3.500 2.600 7.500 4 12.500 4.200V15c0 8-5 12.500-12.500 15.500C7.500 27.500 2.500 23 2.500 15V6.200C7.500 6 11.500 4.600 15 2z" />
        </svg>
        <Elapsed>10:16</Elapsed>
        <BarActions>
          <BarButton aria-label="People">
            <svg width="32" height="30" viewBox="0 0 32 30" fill="none" stroke="currentColor" strokeWidth="1.800">
              <circle cx="11.500" cy="8" r="6" /><circle cx="24.500" cy="9.500" r="4" />
              <path d="M4 17.500h15q2.500 0 2.500 2.500v1c0 5-4 7.500-10 7.500S1.500 26 1.500 21v-1q0-2.500 2.500-2.500zM23.500 17.500h5q2.500 0 2.500 2.500c0 5-3 7-7.500 6.700" />
            </svg>
          </BarButton>
          <BarButton aria-label="Chat">
            <svg width="32" height="32" viewBox="0 0 32 32" fill="none" stroke="currentColor" strokeWidth="1.800">
              <path d="M2 30.500 3.500 22A14 14 0 1 1 9.500 28.500zM10.500 13h11M10.500 18.500h7.500" strokeLinecap="round" strokeLinejoin="round" />
            </svg>
          </BarButton>
          <BarButton aria-label="Reactions">
            <svg width="32" height="32" viewBox="0 0 32 32" fill="none" stroke="currentColor" strokeWidth="1.800">
              <path d="M2.500 14V6.500Q2.500 5 4 5t1.500 1.500V3.500Q5.500 2 7 2t1.500 1.500Q8.500 1 10 1t1.500 2.500Q11.500 2 13 2t1.500 1.500V13l2.500-2.500q2-1 2 1C17.500 14.500 16 18.500 13.500 20.500c-2.500 1.500-5 1-7-1s-4-3-4-5.500z" fill="#1f1f1f" />
              <path d="M5.500 6v6M8.500 3.500V12M11.500 3.500V12" strokeWidth="1.500" />
              <circle cx="21.500" cy="21.500" r="9" fill="#1f1f1f" />
              <path d="M17.500 23.500q4 4.500 8 0" /><circle cx="18.700" cy="19" r="1.200" fill="currentColor" stroke="none" /><circle cx="24.300" cy="19" r="1.200" fill="currentColor" stroke="none" />
            </svg>
          </BarButton>
          <BarButton aria-label="More actions">
            <svg width="28" height="8" viewBox="0 0 28 8" fill="currentColor"><circle cx="4" cy="4" r="3.300" /><circle cx="14" cy="4" r="3.300" /><circle cx="24" cy="4" r="3.300" /></svg>
          </BarButton>
          <BarDivider />
          <BarButton $bright aria-label="Camera off">
            <svg width="32" height="32" viewBox="0 0 32 32"><rect x="1" y="4.500" width="20" height="23" rx="4.500" fill="#fff" /><path d="m22.500 13 6.500-5q2-1 2 1v14q0 2-2 1l-6.500-5z" fill="#fff" /><path d="M4 .5 32 29" stroke="#1f1f1f" strokeWidth="3" /><path d="M1 .8 31 30.800" stroke="#fff" strokeWidth="2" /></svg>
          </BarButton>
          <BarButton $bright aria-label="Microphone off"><MicOff size={31} bright /></BarButton>
          <BarButton $bright aria-label="Share content">
            <svg width="30" height="24" viewBox="0 0 30 24"><rect width="30" height="24" rx="4" fill="#fff" /><path d="M15 20V5M10 10l5-5 5 5" fill="none" stroke="#1f1f1f" strokeWidth="1.800" /></svg>
          </BarButton>
          <LeaveButton>
            <svg width="30" height="14" viewBox="0 0 30 14" fill="#fff"><path d="M15 .5c9 0 14.500 4 14.500 9 0 2-.5 3.800-2 3.800L22 12.200c-1.500-.4-1.700-1.500-1.700-3C20 7.500 18 7 15 7s-5 .5-5.300 2.200c0 1.500-.2 2.600-1.700 3l-5.500 1.100c-1.500 0-2-1.800-2-3.800 0-5 5.500-9 14.500-9z" /></svg>
            Leave
          </LeaveButton>
        </BarActions>
      </MeetingBar>
      <Roster>
        <People>
          {people.map((p) => (
            <Person key={p.name}>
              <Avatar $size={105} $speaking={p.speaking}><PersonGlyph size={105} /></Avatar>
              <PersonLabel>
                <PersonName $width={p.width}>{p.name}</PersonName>
                {p.muted && <MicOff size={19} />}
              </PersonLabel>
            </Person>
          ))}
          <Person><MoreButton>+19</MoreButton></Person>
        </People>
        <SelfTile><Avatar $size={85}><PersonGlyph size={85} /></Avatar></SelfTile>
      </Roster>
      <Stage>
        <PresenterColumn><PresenterName>Mohammed Mukthar (Guest)</PresenterName></PresenterColumn>
        <SharedDesktop />
      </Stage>
      <DeskTaskbar>
        <StartButton $w={72} aria-label="Start"><WindowsLogo size={24} /></StartButton>
        <SearchBox $large><Magnifier size={24} color="#111" /><input aria-label="Search" placeholder="Type here to search" /></SearchBox>
        <AppButton $w={72} aria-label="Task view"><TaskView size={26} /></AppButton>
        <Gap $w={11} />
        <AppButton $w={61} $running aria-label="Chrome"><Chrome size={34} /></AppButton>
        <Gap $w={14} />
        <AppButton $w={61} aria-label="Files"><Folder size={32} /></AppButton>
        <Gap $w={14} />
        <AppButton $w={61} $running aria-label="Webex"><Webex /></AppButton>
        <Gap $w={8} />
        <AppButton $w={67} $active $running aria-label="Teams"><Teams /></AppButton>
        <Stack />
        <Tray>
          <Weather $large><Sun size={28} id="sunLarge" /><Degrees $large>{"36°C  Sunny"}</Degrees></Weather>
          <TrayCell $w={36} aria-label="Hidden icons"><Chevron w={18} /></TrayCell>
          <TrayCell $w={36} aria-label="Microphone"><TrayMic h={25} /></TrayCell>
          <TrayCell $w={38} aria-label="Battery"><Battery w={24} /></TrayCell>
          <TrayCell $w={38} aria-label="Network"><Wifi s={19} /></TrayCell>
          <TwoLine $large $w={49}>{"ENG\nUS"}</TwoLine>
          <TwoLine $large $w={118}>{"14:46\n10-03-2022"}</TwoLine>
          <TrayCell $w={56} aria-label="Notifications">
            <svg width="26" height="26" viewBox="0 0 26 26"><path d="M1 1h24v18h-9l-4 5-1-5H1z" fill="#fff" /><path d="M5.500 6h15M5.500 10h15M5.500 14h9" stroke="#1c1c1c" strokeWidth="1.500" /><path d="M22 12.500q4.500 6-1 10.500-5 2-7-1.500 7 0 8-9z" fill="#1c1c1c" stroke="#fff" /></svg>
          </TrayCell>
          <Gap $w={15} />
          <DeskEdge $after={6} />
        </Tray>
      </DeskTaskbar>
    </Page>
  );
}
